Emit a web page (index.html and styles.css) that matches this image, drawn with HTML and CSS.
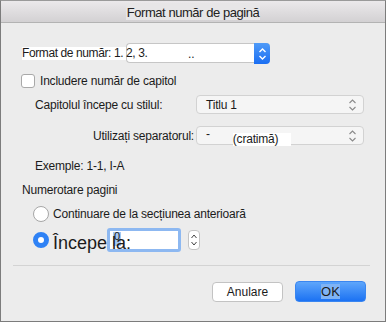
FILE: index.html
```html
<!DOCTYPE html>
<html lang="ro">
<head>
    <meta charset="UTF-8">
    <title>Format număr de pagină</title>
    <link rel="stylesheet" href="styles.css">
</head>
<body>
    <div class="window">
        <div class="titlebar"><span class="title">Format număr de pagină</span></div>

        <div class="row format-row">
            <span class="format-label">Format de număr: 1. 2, 3.</span>
            <div class="combo">
                <span class="combo-text">..</span>
                <span class="combo-btn">
                    <svg width="9" height="14" viewBox="0 0 9 14"><path d="M1.5 5 L4.5 2 L7.5 5 M1.5 9 L4.5 12 L7.5 9" fill="none" stroke="#fff" stroke-width="1.4"/></svg>
                </span>
            </div>
        </div>

        <div class="row check-row">
            <span class="checkbox"></span>
            <span class="check-label">Includere număr de capitol</span>
        </div>

        <div class="row field-row first">
            <span class="field-label">Capitolul începe cu stilul:</span>
            <div class="select">
                <span class="select-text">Titlu 1</span>
                <svg class="arrows" width="9" height="14" viewBox="0 0 9 14"><path d="M1.5 5 L4.5 2 L7.5 5 M1.5 9 L4.5 12 L7.5 9" fill="none" stroke="#8a8a8a" stroke-width="1.1"/></svg>
            </div>
        </div>

        <div class="row field-row second">
            <span class="field-label right">Utilizați separatorul:</span>
            <div class="select">
                <span class="select-text dash">-</span>
                <span class="cratima">(cratimă)</span>
                <svg class="arrows" width="9" height="14" viewBox="0 0 9 14"><path d="M1.5 5 L4.5 2 L7.5 5 M1.5 9 L4.5 12 L7.5 9" fill="none" stroke="#8a8a8a" stroke-width="1.1"/></svg>
            </div>
        </div>

        <div class="row example">Exemple: 1-1, I-A</div>

        <div class="row section">Numerotare pagini</div>

        <div class="row radio-row first">
            <span class="radio"></span>
            <span class="radio-label">Continuare de la secțiunea anterioară</span>
        </div>

        <div class="row radio-row second">
            <span class="radio on"></span>
            <span class="start-label">Începe la:</span>
            <div class="start-input"><span class="sel">0</span></div>
            <span class="stepper">
                <svg width="8" height="16" viewBox="0 0 8 16"><path d="M1.5 6 L4 3 L6.5 6 M1.5 10 L4 13 L6.5 10" fill="none" stroke="#444" stroke-width="1"/></svg>
            </span>
        </div>

        <div class="separator"></div>

        <div class="row buttons">
            <button class="btn">Anulare</button>
            <button class="btn primary"><span class="ok-text">OK</span></button>
        </div>
    </div>
</body>
</html>
```

FILE: styles.css
```css
body {
    margin: 0;
    font-family: "Liberation Sans", Arial, sans-serif;
    font-size: 12px;
    letter-spacing: -0.2px;
    color: #1b1b1b;
}
.window {
    width: 386px;
    height: 322px;
    box-sizing: border-box;
    background: #ececec;
    border-left: 1px solid #7c7c7c;
    border-right: 1px solid #7c7c7c;
    border-bottom: 1px solid #7c7c7c;
    border-top: 1px solid #9a9a9a;
    overflow: hidden;
}
.titlebar {
    height: 21px;
    border-bottom: 1px solid #b3b3b3;
    background: linear-gradient(#ebe9eb, #d3d1d3);
    display: flex;
    justify-content: center;
    align-items: center;
}
.title {
    font-size: 13px;
    letter-spacing: -0.45px;
    color: #222;
    background: #e7e6e7;
    padding: 2px 1px 0;
    line-height: 15px;
}
.row {
    display: flex;
    align-items: center;
}

/* format */
.format-row {
    margin-top: 20px;
    padding-left: 21px;
    height: 20px;
}
.format-label {
    width: 104px;
    white-space: nowrap;
    line-height: 13px;
    background: #fff;
    position: relative;
    z-index: 1;
    letter-spacing: -0.4px;
}
.combo {
    width: 144px;
    height: 20px;
    box-sizing: border-box;
    background: #fff;
    border: 1px solid #c6c6c6;
    border-right: none;
    border-radius: 4px;
    display: flex;
    align-items: flex-end;
}
.combo-text {
    margin-left: 61px;
    flex: 1;
    line-height: 15px;
}
.combo-btn {
    width: 16px;
    height: 21px;
    margin-top: -1px;
    align-self: flex-start;
    border-radius: 0 4px 4px 0;
    background: linear-gradient(#4f9bf8, #1b6ef2);
    display: flex;
    align-items: center;
    justify-content: center;
}

/* checkbox */
.check-row {
    margin-top: 11px;
    padding-left: 20px;
    height: 14px;
}
.checkbox {
    width: 14px;
    height: 14px;
    box-sizing: border-box;
    background: #fff;
    border: 1px solid #a9a9a9;
    border-radius: 3px;
}
.check-label {
    margin-left: 5px;
}

/* chapter fields */
.field-row {
    padding-left: 34px;
    height: 19px;
}
.field-row.first {
    margin-top: 7px;
}
.field-row.second {
    margin-top: 12px;
}
.field-label {
    width: 161px;
}
.field-label.right {
    text-align: right;
    width: 159px;
    padding-right: 2px;
}
.select {
    width: 168px;
    height: 19px;
    box-sizing: border-box;
    background: #f5f5f5;
    border: 1px solid #d2d2d2;
    border-radius: 4px;
    display: flex;
    align-items: center;
    position: relative;
}
.select-text {
    margin-left: 9px;
}
.select-text.dash {
    margin-top: -4px;
}
.cratima {
    margin-left: 23px;
    margin-top: 8px;
    background: #fff;
    padding-right: 13px;
    line-height: 13px;
}
.arrows {
    position: absolute;
    right: 6px;
    top: 2px;
}

.example {
    margin-top: 14px;
    padding-left: 34px;
    height: 14px;
}
.section {
    margin-top: 10px;
    padding-left: 21px;
    height: 14px;
}

/* radios */
.radio-row {
    padding-left: 32px;
}
.radio-row.first {
    margin-top: 9px;
    height: 16px;
}
.radio-row.second {
    margin-top: 6px;
    height: 24px;
}
.radio {
    width: 16px;
    height: 16px;
    box-sizing: border-box;
    border-radius: 50%;
    background: #fff;
    border: 1px solid #a6a6a6;
}
.radio.on {
    border: 5px solid #2f82f5;
    background: #fff;
}
.radio-label {
    margin-left: 4px;
}
.start-label {
    margin-left: 4px;
    width: 54px;
    white-space: nowrap;
    font-size: 18px;
    letter-spacing: 0;
    position: relative;
    z-index: 1;
    margin-top: 6px;
}
.start-input {
    width: 74px;
    height: 24px;
    box-sizing: border-box;
    border: 3px solid #8db8f1;
    border-radius: 3px;
    background: #fff;
    display: flex;
}
.sel {
    margin-left: 3px;
    margin-top: 1px;
    width: 8px;
    height: 14px;
    background: #a7c8f3;
    font-size: 11px;
    line-height: 9px;
    text-align: center;
}
.stepper {
    margin-left: 7px;
    width: 12px;
    height: 20px;
    box-sizing: border-box;
    background: #fff;
    border: 1px solid #c4c4c4;
    border-radius: 4px;
    display: flex;
    align-items: center;
    justify-content: center;
}

.separator {
    margin: 13px 15px 0 12px;
    height: 1px;
    background: #d3d3d3;
}

/* buttons */
.buttons {
    margin-top: 15px;
    justify-content: flex-end;
    padding-right: 19px;
    gap: 12px;
    height: 21px;
}
.btn {
    width: 71px;
    height: 20px;
    margin-top: 1px;
    font-family: "Liberation Sans", Arial, sans-serif;
    font-size: 12px;
    color: #1b1b1b;
    background: #fff;
    border: 1px solid #c3c3c3;
    border-radius: 4px;
    padding: 0;
}
.btn.primary {
    height: 21px;
    margin-top: 0;
    background: linear-gradient(#5ea6fb, #1c72f3);
    border: 1px solid #3a86f0;
}
.ok-text {
    background: #7fb3f5;
    font-size: 13px;
}
```
